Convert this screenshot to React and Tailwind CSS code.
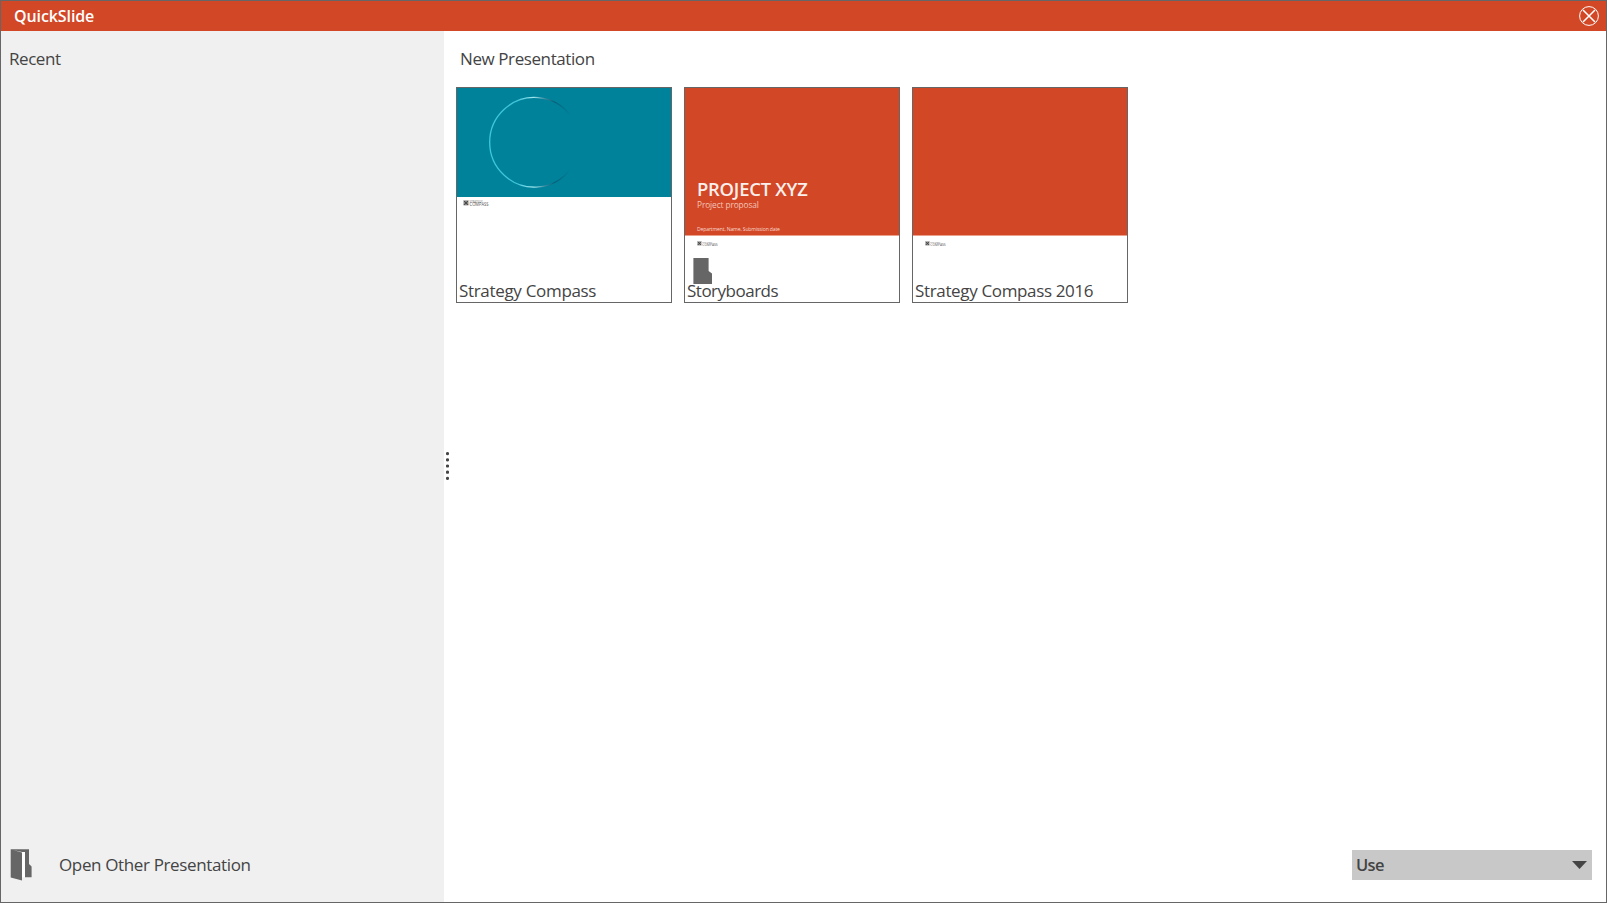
import React from "react";

function Logo({ className }) {
  return (
    <svg className={className} viewBox="0 0 26 6" aria-hidden="true">
      <rect x="0.5" y="0.4" width="5" height="5" fill="#8a8a8a" />
      <path d="M1 0.9l4 4M5 0.9L1 4.9" stroke="#444" strokeWidth="1" />
      <text x="6.6" y="2.5" fontSize="2.8" fill="#777" textLength="13" lengthAdjust="spacingAndGlyphs" fontFamily="Open Sans, sans-serif">STRATEGY</text>
      <text x="6.6" y="5.8" fontSize="4.4" fill="#555" textLength="19" lengthAdjust="spacingAndGlyphs" fontFamily="Open Sans, sans-serif">COMPASS</text>
    </svg>
  );
}

function CompassSlide() {
  return (
    <div className="flex h-full flex-col">
      <div className="h-[109px] bg-[#00829b]">
        <svg className="h-[109px] w-[214px]" viewBox="0 0 214 109" fill="none">
          <defs>
            <linearGradient id="arc" gradientUnits="userSpaceOnUse" x1="32" y1="0" x2="114" y2="0">
              <stop offset="0" stopColor="#3cc8dc" />
              <stop offset="0.35" stopColor="#40c4d8" />
              <stop offset="0.54" stopColor="#a0e8f0" />
              <stop offset="0.68" stopColor="#3a8ba0" />
              <stop offset="0.8" stopColor="#066078" />
              <stop offset="1" stopColor="#00829b" />
            </linearGradient>
          </defs>
          <path d="M113 27A44.8 44.8 0 1 0 113 81.6" stroke="url(#arc)" strokeWidth="1.3" />
        </svg>
      </div>
      <Logo className="ml-[6px] mt-[3px] h-[6px] w-[26px]" />
    </div>
  );
}

function StoryboardSlide() {
  return (
    <div className="flex h-full flex-col font-['Open_Sans',sans-serif]">
      <div className="flex h-[148px] flex-col border-b border-[#eba08c] bg-[#d24726] pl-[12px] pt-[88px] text-white">
        <div className="whitespace-nowrap text-[18.4px] font-semibold leading-[25px] tracking-[-0.22px] text-[#fdf0ec]">PROJECT XYZ</div>
        <div className="whitespace-nowrap text-[8.3px] leading-[8px] tracking-[-0.1px] text-[#f3c4b6]">Project proposal</div>
        <div className="mt-[16px] whitespace-nowrap text-[5.1px] leading-[8px] tracking-[-0.15px] text-[#f8d8ce]">Department, Name, Submission date</div>
      </div>
      <Logo className="ml-[12px] mt-[5px] h-[5px] w-[21px]" />
      <svg className="ml-[8px] mt-[11px] h-[27px] w-[20px]" viewBox="0 0 20 27">
        <path d="M0.4 1h15.2v13l3.4 2.5v10.5H0.4z" fill="#666" />
      </svg>
    </div>
  );
}

function PlainSlide() {
  return (
    <div className="flex h-full flex-col">
      <div className="h-[148px] border-b border-[#eba08c] bg-[#d24726]" />
      <Logo className="ml-[12px] mt-[5px] h-[5px] w-[21px]" />
    </div>
  );
}

function Card({ title, spacing, children }) {
  return (
    <div className="relative h-[216px] w-[216px] border border-[#666] bg-white">
      {children}
      <div className={`absolute bottom-[-1px] left-[2px] whitespace-nowrap leading-[24px] ${spacing}`}>{title}</div>
    </div>
  );
}

export default function App() {
  return (
    <div className="flex h-[903px] w-[1607px] flex-col border border-[#666] bg-white font-['Open_Sans',sans-serif] text-[17px] text-[#444]">
      <header className="flex h-[30px] shrink-0 items-center justify-between bg-[#d24726] pl-[13px] pr-[7px]">
        <h1 className="text-[16px] font-semibold leading-[30px] tracking-[-0.1px] text-white">QuickSlide</h1>
        <button aria-label="Close">
          <svg className="block h-[20px] w-[20px]" viewBox="0 0 20 20" fill="none" stroke="#fff">
            <circle cx="10" cy="10" r="9.4" strokeWidth="1" />
            <path d="M4 4l12 12M16 4L4 16" strokeWidth="1.5" />
          </svg>
        </button>
      </header>
      <div className="flex min-h-0 flex-1">
        <aside className="flex w-[443px] flex-col justify-between bg-[#f0f0f0] pb-[20px] pt-[16px]">
          <h2 className="pl-[8px] leading-[24px] tracking-[-0.45px]">Recent</h2>
          <button className="flex h-[34px] items-center pl-[9px]">
            <svg className="h-[32px] w-[22px]" viewBox="0 0 22 32">
              <path d="M0.7 0.2H19V15l2.6 2.4V28.2H15V3.2H12V31.5L0.7 28.4z" fill="#666" />
              <path d="M3 1.1L12 3.6V28.2h3V3.1H12z" fill="#fff" />
            </svg>
            <span className="ml-[27px] whitespace-nowrap tracking-[-0.36px]">Open Other Presentation</span>
          </button>
        </aside>
        <div className="flex w-[7px] flex-col items-center justify-center pb-[1px]">
          <svg className="h-[30px] w-[3px]" viewBox="0 0 3 30" fill="#444">
            <circle cx="1.5" cy="2.6" r="1.6" />
            <circle cx="1.5" cy="8.8" r="1.6" />
            <circle cx="1.5" cy="15" r="1.6" />
            <circle cx="1.5" cy="21.2" r="1.6" />
            <circle cx="1.5" cy="27.4" r="1.6" />
          </svg>
        </div>
        <main className="flex flex-1 flex-col pb-[22px] pl-[5px] pt-[16px]">
          <h2 className="pl-[4px] leading-[24px] tracking-[-0.41px]">New Presentation</h2>
          <div className="mt-[16px] flex gap-3">
            <Card title="Strategy Compass" spacing="tracking-[-0.32px]">
              <CompassSlide />
            </Card>
            <Card title="Storyboards" spacing="tracking-[-0.5px]">
              <StoryboardSlide />
            </Card>
            <Card title="Strategy Compass 2016" spacing="tracking-[-0.35px]">
              <PlainSlide />
            </Card>
          </div>
          <button className="mr-[14px] mt-auto flex h-[30px] w-[240px] items-center justify-between self-end bg-[#c8c8c8] pl-[4px] pr-[5px]">
            <span className="text-[16.5px] font-semibold tracking-[-0.7px]">Use</span>
            <svg className="h-[8px] w-[15px]" viewBox="0 0 15 8">
              <path d="M0 0h15L7.5 8z" fill="#444" />
            </svg>
          </button>
        </main>
      </div>
    </div>
  );
}
